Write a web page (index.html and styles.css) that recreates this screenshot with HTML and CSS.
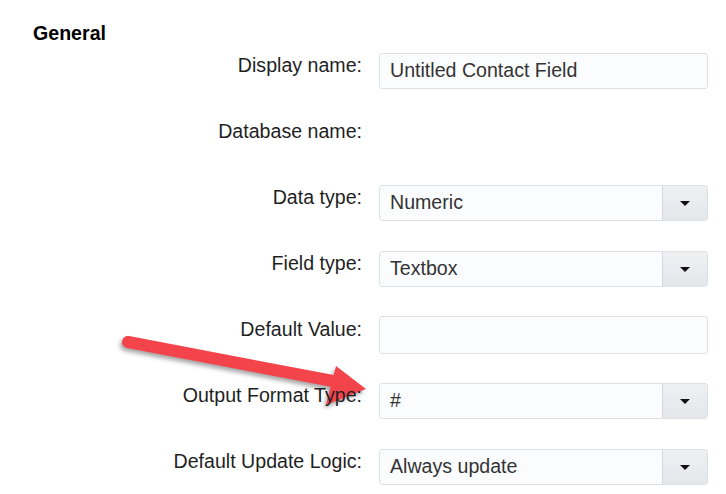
FILE: index.html
```html
<!DOCTYPE html>
<html lang="en">
<head>
  <meta charset="UTF-8" />
  <meta name="viewport" content="width=device-width, initial-scale=1.0" />
  <title>Contact Field - General</title>
  <link rel="stylesheet" href="styles.css">
</head>
<body>
  <section class="panel">
    <h3>General</h3>

    <div class="form-grid">
      <label class="field-label">Display name:</label>
      <div class="field">
        <input type="text" class="text-input" value="Untitled Contact Field">
      </div>

      <label class="field-label">Database name:</label>
      <div class="field"></div>

      <label class="field-label">Data type:</label>
      <div class="field">
        <div class="combo">
          <span class="combo-value">Numeric</span>
          <span class="combo-btn"><i class="caret"></i></span>
        </div>
      </div>

      <label class="field-label">Field type:</label>
      <div class="field">
        <div class="combo">
          <span class="combo-value">Textbox</span>
          <span class="combo-btn"><i class="caret"></i></span>
        </div>
      </div>

      <label class="field-label">Default Value:</label>
      <div class="field">
        <input type="text" class="text-input tall" value="">
      </div>

      <label class="field-label">Output Format Type:</label>
      <div class="field">
        <div class="combo">
          <span class="combo-value">#</span>
          <span class="combo-btn"><i class="caret"></i></span>
        </div>
      </div>

      <label class="field-label">Default Update Logic:</label>
      <div class="field">
        <div class="combo">
          <span class="combo-value">Always update</span>
          <span class="combo-btn"><i class="caret"></i></span>
        </div>
      </div>
    </div>

    <!-- annotation arrow -->
    <svg class="callout" width="726" height="494" viewBox="0 0 726 494">
      <g class="callout-shape">
        <line x1="128" y1="342" x2="338" y2="382" stroke="#f4444b" stroke-width="12" stroke-linecap="round" />
        <polygon points="366,389 336,366 326,405" fill="#f4444b" />
      </g>
    </svg>
  </section>
</body>
</html>
```

FILE: styles.css
```css
body {
  margin: 0;
  font-family: "Liberation Sans", Arial, sans-serif;
  font-size: 19.6px;
  color: #1f1f1f;
  background: #fff;
}

.panel {
  position: relative;
  padding: 22px 0 0 33px;
}

.panel h3 {
  margin: 0 0 9px;
  font-size: 19.6px;
  font-weight: bold;
  line-height: 22px;
  color: #000;
}

.form-grid {
  position: relative;
  z-index: 1;
  display: grid;
  grid-template-columns: 329px 329px;
  grid-auto-rows: 36px;
  column-gap: 17px;
  row-gap: 30px;
}

.field-label {
  padding-top: 1px;
  text-align: right;
  line-height: normal;
  color: #1f1f1f;
}

.field {
  display: flex;
  align-items: center;
}

.text-input {
  box-sizing: border-box;
  width: 100%;
  height: 36px;
  padding: 0 10px 2px;
  border: 1px solid #dde1e6;
  border-radius: 3px;
  background: #fbfcfe;
  font-family: inherit;
  font-size: 19.6px;
  color: #333;
  outline: none;
}

.text-input.tall {
  height: 38px;
}

.combo {
  box-sizing: border-box;
  display: flex;
  width: 100%;
  height: 36px;
  border: 1px solid #dde1e6;
  border-radius: 3px;
  background: #fbfcfe;
  overflow: hidden;
}

.combo-value {
  flex: 1;
  padding: 0 10px;
  line-height: 32px;
  color: #333;
}

.combo-btn {
  width: 44px;
  display: flex;
  align-items: center;
  justify-content: center;
  border-left: 1px solid #d3d7dc;
  background: linear-gradient(#eef0f2, #e4e7ea);
}

.caret {
  width: 0;
  height: 0;
  border-left: 5px solid transparent;
  border-right: 5px solid transparent;
  border-top: 5px solid #111;
}

.callout {
  position: absolute;
  left: 0;
  top: 0;
  z-index: 0;
  pointer-events: none;
}

.callout-shape {
  filter: drop-shadow(-2px 3px 2px rgba(0, 0, 0, 0.35));
}
```
